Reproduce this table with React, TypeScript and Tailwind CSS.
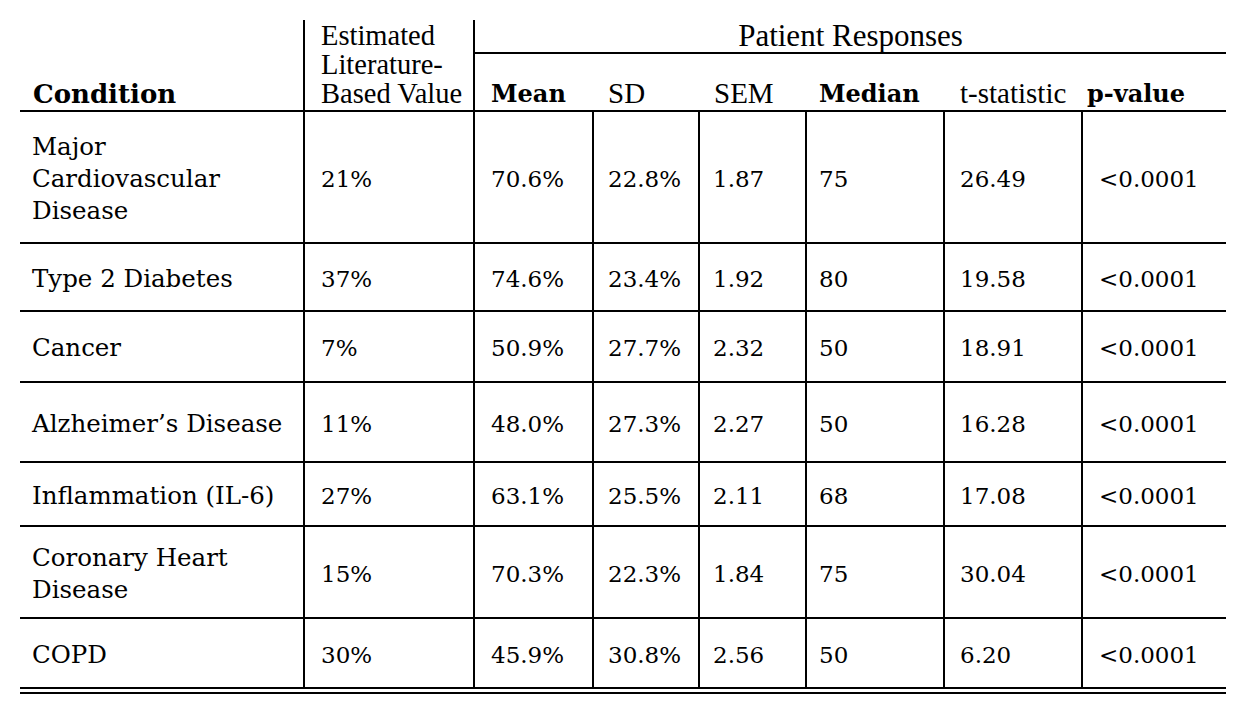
import React from "react";

const rows = [
  { name: ["Major", "Cardiovascular", "Disease"], est: "21%", mean: "70.6%", sd: "22.8%", sem: "1.87", median: "75", t: "26.49", p: "<0.0001", h: "h-[132px]" },
  { name: ["Type 2 Diabetes"], est: "37%", mean: "74.6%", sd: "23.4%", sem: "1.92", median: "80", t: "19.58", p: "<0.0001", h: "h-[68px]" },
  { name: ["Cancer"], est: "7%", mean: "50.9%", sd: "27.7%", sem: "2.32", median: "50", t: "18.91", p: "<0.0001", h: "h-[71px]" },
  { name: ["Alzheimer’s Disease"], est: "11%", mean: "48.0%", sd: "27.3%", sem: "2.27", median: "50", t: "16.28", p: "<0.0001", h: "h-[80px]" },
  { name: ["Inflammation (IL-6)"], est: "27%", mean: "63.1%", sd: "25.5%", sem: "2.11", median: "68", t: "17.08", p: "<0.0001", h: "h-[64px]" },
  { name: ["Coronary Heart", "Disease"], est: "15%", mean: "70.3%", sd: "22.3%", sem: "1.84", median: "75", t: "30.04", p: "<0.0001", h: "h-[92px]" },
  { name: ["COPD"], est: "30%", mean: "45.9%", sd: "30.8%", sem: "2.56", median: "50", t: "6.20", p: "<0.0001", h: "h-[70px]" },
];

const georgia = "font-['DejaVu_Serif',serif]";
const times = "font-['Liberation_Serif',serif]";

const App: React.FC = () => {
  const cell = "border-b-2 border-r-2 border-black align-middle text-left p-0 pt-[3px] whitespace-nowrap";

  return (
    <div className="min-h-screen bg-white pl-[20px] pt-[20px] text-black">
      <table className="table-fixed border-separate border-spacing-0 w-[1206px]">
        <colgroup>
          <col className="w-[285px]" />
          <col className="w-[170px]" />
          <col className="w-[119px]" />
          <col className="w-[106px]" />
          <col className="w-[107px]" />
          <col className="w-[138px]" />
          <col className="w-[138px]" />
          <col className="w-[143px]" />
        </colgroup>
        <thead>
          <tr className="h-[34px]">
            <th
              rowSpan={2}
              className={`${georgia} border-b-2 border-r-2 border-black align-bottom text-left pl-[13px] pb-[2px] text-[26px] leading-[28px] font-bold`}
            >
              Condition
            </th>
            <th
              rowSpan={2}
              className={`${times} border-b-2 border-r-2 border-black align-bottom text-left pl-[16px] pb-[2px] text-[28.5px] leading-[29px] font-normal`}
            >
              Estimated
              <br />
              Literature-
              <br />
              Based Value
            </th>
            <th
              colSpan={6}
              className={`${times} border-b-2 border-black align-middle text-center p-0 text-[31px] leading-[28px] font-normal`}
            >
              Patient Responses
            </th>
          </tr>
          <tr className="h-[58px]">
            <th className={`${georgia} border-b-2 border-black align-bottom text-left pl-[16px] pb-[2px] text-[24px] leading-[28px] font-bold`}>
              Mean
            </th>
            <th className={`${times} border-b-2 border-black align-bottom text-left pl-[14px] pb-[3px] text-[29px] leading-[28px] font-normal`}>
              SD
            </th>
            <th className={`${times} border-b-2 border-black align-bottom text-left pl-[14px] pb-[3px] text-[29px] leading-[28px] font-normal`}>
              SEM
            </th>
            <th className={`${georgia} border-b-2 border-black align-bottom text-left pl-[12px] pb-[2px] text-[24px] leading-[28px] font-bold`}>
              Median
            </th>
            <th className={`${times} border-b-2 border-black align-bottom text-left pl-[15px] pb-[3px] text-[29px] leading-[28px] font-normal`}>
              t-statistic
            </th>
            <th className={`${georgia} border-b-2 border-black align-bottom text-left pl-[4px] pb-[2px] text-[24px] leading-[28px] font-bold`}>
              p-value
            </th>
          </tr>
        </thead>
        <tbody className={`${georgia} text-[23px] leading-[32px]`}>
          {rows.map((r) => (
            <tr key={r.name.join(" ")} className={r.h}>
              <td className={`${cell} pl-[12px] text-[24.5px]`}>
                {r.name.map((line, i) => (
                  <div key={i}>{line}</div>
                ))}
              </td>
              <td className={`${cell} pl-[16px]`}>{r.est}</td>
              <td className={`${cell} pl-[16px]`}>{r.mean}</td>
              <td className={`${cell} pl-[14px]`}>{r.sd}</td>
              <td className={`${cell} pl-[13px]`}>{r.sem}</td>
              <td className={`${cell} pl-[12px]`}>{r.median}</td>
              <td className={`${cell} pl-[15px]`}>{r.t}</td>
              <td className="border-b-2 border-black align-middle text-left p-0 pt-[3px] pl-[16px] whitespace-nowrap">{r.p}</td>
            </tr>
          ))}
        </tbody>
      </table>
      <div className="mt-[3px] h-[2px] w-[1206px] bg-black" />
    </div>
  );
};

export default App;
